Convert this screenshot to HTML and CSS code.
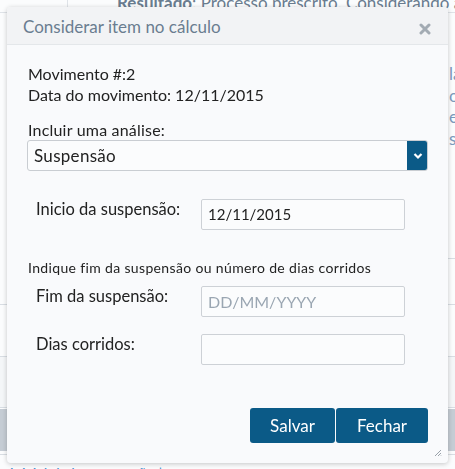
FILE: index.html
```html
<!DOCTYPE html>
<html lang="pt">
<head>
<meta charset="utf-8">
<title>Considerar item no cálculo</title>
<link rel="stylesheet" href="styles.css">
</head>
<body>
<div class="page">
  <div class="bg-row bg-top">
    <div class="bg-side"></div>
    <div class="bg-result"><b>Resultado</b>: Processo prescrito. Considerando a data de</div>
  </div>
  <div class="bg-frag">
    <span>la</span>
    <span>o</span>
    <span>e</span>
    <span>s</span>
  </div>
  <div class="bg-line bg-line-right l1"></div>
  <div class="bg-line l2"></div>
  <div class="bg-line l3"></div>
  <div class="bg-tint"></div>
  <div class="bg-band"></div>
  <div class="bg-line l4"></div>
  <div class="bg-foot">inicial de la suspensão | o</div>
</div>

<div class="dialog" role="dialog">
  <div class="dlg-head">
    <span class="dlg-title">Considerar item no cálculo</span>
    <svg class="dlg-close" width="12" height="12" viewBox="0 0 12 12"><path d="M2 2 L10 10 M10 2 L2 10" stroke="#a3abb3" stroke-width="3" stroke-linecap="round"/></svg>
  </div>
  <div class="dlg-body">
    <div class="info">
      <div>Movimento #:2</div>
      <div>Data do movimento: 12/11/2015</div>
    </div>
    <div class="field-block">
      <div class="lbl-top">Incluir uma análise:</div>
      <div class="select">
        <span class="select-val">Suspensão</span>
        <span class="select-btn"><svg width="10" height="8" viewBox="0 0 10 8"><path d="M1.5 2 L5 5.5 L8.5 2" stroke="#fff" stroke-width="2.2" fill="none"/></svg></span>
      </div>
    </div>
    <div class="row first">
      <span class="row-lbl">Inicio da suspensão:</span>
      <div class="input">12/11/2015</div>
    </div>
    <div class="hint">Indique fim da suspensão ou número de dias corridos</div>
    <div class="row after-hint">
      <span class="row-lbl">Fim da suspensão:</span>
      <div class="input placeholder">DD/MM/YYYY</div>
    </div>
    <div class="row">
      <span class="row-lbl">Dias corridos:</span>
      <div class="input"></div>
    </div>
    <div class="actions">
      <button class="btn">Salvar</button>
      <button class="btn wide">Fechar</button>
    </div>
  </div>
  <svg class="resize" width="8" height="8" viewBox="0 0 8 8"><path d="M7 1 L1 7 M7 4 L4 7 M7 6.5 L6.5 7" stroke="#9aa2aa" stroke-width="1"/></svg>
</div>
</body>
</html>
```
FILE: styles.css
```css
* { box-sizing: border-box; }
html, body { margin: 0; padding: 0; }
body {
  width: 455px;
  height: 469px;
  overflow: hidden;
  background: #fbfcfd;
  font-family: Lato, "Open Sans", sans-serif;
  color: #222;
}
.page { position: relative; height: 469px; overflow: hidden; }
.bg-row { display: flex; }
.bg-top { height: 13px; border-bottom: 1px solid #dfe3e8; }
.bg-side { width: 68px; flex-shrink: 0; border-right: 1px solid #dfe3e8; }
.bg-result {
  margin-top: -7px;
  padding-left: 49px;
  font-size: 17px;
  line-height: 20px;
  color: #6a7d90;
  white-space: nowrap;
}
.bg-result b { font-weight: 700; }
.bg-frag {
  display: flex;
  flex-direction: column;
  padding-left: 449px;
  margin-top: 50px;
  font-size: 17px;
  line-height: 21.5px;
  color: #7b9bbd;
}
.bg-line { height: 1px; background: #d8dde3; }
.l1 { margin-top: 109px; }
.bg-line-right { margin-left: 440px; }
.l2 { margin-top: 45px; }
.l3 { margin-top: 51px; }
.bg-tint { height: 51px; background: #f4f6f8; border-bottom: 1px solid #d8dde3; }
.bg-band { margin-top: 1px; height: 42px; background: #c5ccd4; }
.l4 { margin-top: 3px; }
.bg-foot {
  margin-top: 9px;
  padding-left: 10px;
  font-size: 15px;
  line-height: 18px;
  color: #3b8fd0;
  white-space: nowrap;
}

.dialog {
  position: fixed;
  left: 7px;
  top: 7px;
  width: 441px;
  height: 456px;
  background: #f9fafc;
  border-radius: 4px;
  box-shadow: 0 1px 5px rgba(0,0,0,0.22);
  overflow: hidden;
}
.dlg-head {
  height: 38px;
  background: #f2f3f5;
  border-bottom: 1px solid #e4e7ea;
  display: flex;
  align-items: center;
  justify-content: space-between;
  padding: 2px 17px 0 16px;
}
.dlg-title { font-size: 17px; color: #6a7d90; }
.dlg-close { margin-top: 4px; }
.dlg-body {
  padding: 18px 20px 0 20px;
  font-size: 16px;
}
.info { line-height: 21px; padding-left: 1px; }
.field-block { margin-top: 15px; }
.lbl-top { line-height: 20px; padding-left: 1px; letter-spacing: 0.2px; }
.select {
  display: flex;
  height: 31px;
  border: 1px solid #c9cdd2;
  border-radius: 3px;
  background: #fbfcfd;
  overflow: hidden;
}
.select-val { flex: 1; padding-left: 6px; line-height: 29px; font-size: 17px; letter-spacing: 0.3px; }
.select-btn {
  width: 21px;
  background: #0b5a87;
  display: flex;
  align-items: center;
  justify-content: center;
  margin: -1px -1px -1px 0;
  border-radius: 0 3px 3px 0;
}
.row {
  display: flex;
  align-items: flex-start;
  margin-top: 17px;
}
.row.first { margin-top: 28px; }
.row.after-hint { margin-top: 10px; }
.row-lbl {
  width: 174px;
  padding-left: 9px;
  font-size: 16.5px;
  line-height: 20px;
}
.input {
  width: 204px;
  height: 31px;
  border: 1px solid #cdd1d6;
  border-radius: 2px;
  background: #fbfcfd;
  padding-left: 6px;
  line-height: 29px;
  font-size: 15px;
  color: #222;
}
.input.placeholder { color: #9aa6b2; font-size: 16px; }
.hint {
  margin-top: 29px;
  font-size: 14px;
  letter-spacing: 0.35px;
  line-height: 17px;
  padding-left: 1px;
}
.actions {
  display: flex;
  justify-content: flex-end;
  gap: 1px;
  margin-top: 43px;
}
.btn {
  height: 35px;
  border: none;
  border-radius: 3px;
  background: #0b5a87;
  color: #fff;
  font-family: inherit;
  font-size: 17px;
  width: 85px;
  padding: 0;
}
.btn.wide { width: 92px; }
.resize { position: absolute; right: 6px; bottom: 6px; }
```
